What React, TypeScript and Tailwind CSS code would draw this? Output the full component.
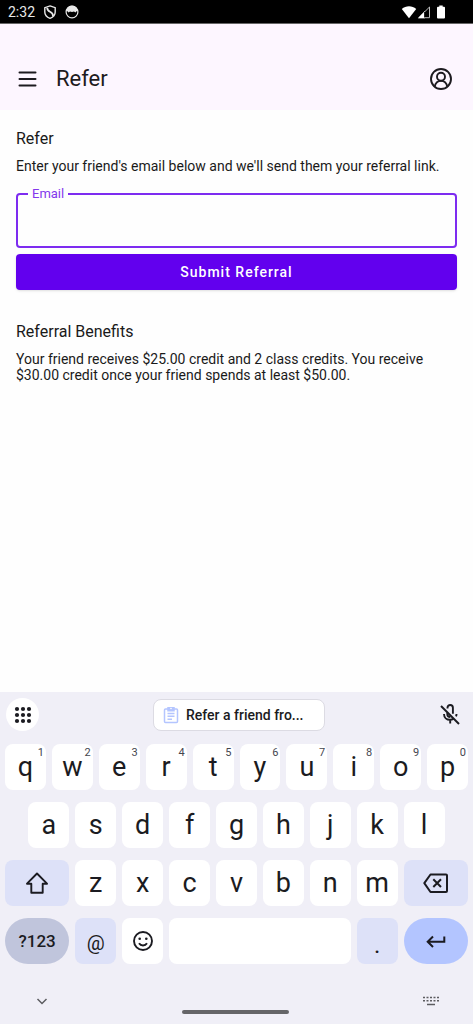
import type { ReactNode } from "react";

const digits = "1234567890";

function StatusBar() {
  return (
    <div className="flex h-6 items-center border-b border-[#666] bg-black px-2 text-[#e8e8e8]">
      <span className="text-sm">2:32</span>
      <svg className="ml-2 size-3.5" viewBox="0 0 14 14" fill="none" stroke="currentColor" strokeWidth="1.4">
        <path d="M7 .9 12.200 2.700V7c0 3-2.200 5.200-5.200 6.300C4 12.200 1.800 10 1.800 7V2.700Z" />
        <path d="M4.200 2.800c0 2.400 1.200 3.200 2.800 4s3.200 2 3 4.200" strokeWidth="1.800" />
      </svg>
      <svg className="ml-2 size-3.5" viewBox="0 0 14 14">
        <circle cx="7" cy="7" r="5.900" fill="none" stroke="currentColor" strokeWidth="1.200" />
        <path d="M1.200 6C1.500 2.500 4 .8 7 .8S12.500 2.500 12.800 6l-1.300.2-1 1.300-1.500-1-2 .6-2-.6-1.500 1-1-1.300Z" fill="currentColor" />
      </svg>
      <div className="ml-auto mr-5 flex items-center text-white">
        <svg className="h-3.5 w-4" viewBox="0 0 16 14" fill="currentColor">
          <path d="M8 13.300.8 4C4.800.4 11.200.4 15.200 4Z" />
        </svg>
        <svg className="h-3.5 w-3.5" viewBox="0 0 14 14">
          <path d="M1.800 12.700 12.500 2V12.700Z" fill="none" stroke="#bbb" />
          <path d="M.8 13.200 8 6V13.200Z" fill="currentColor" />
          <path d="M7.500 7v5.500" stroke="#222" />
        </svg>
        <svg className="ml-1.5 h-3.5 w-2" viewBox="0 0 8 14" fill="currentColor">
          <path d="M2.300.5h3.400v1.300H7a1 1 0 0 1 1 1v9.700a1 1 0 0 1-1 1H1a1 1 0 0 1-1-1V2.800a1 1 0 0 1 1-1h1.300Z" />
        </svg>
      </div>
    </div>
  );
}

function Header() {
  return (
    <header className="flex h-[86px] items-center bg-[#fdf6ff] px-4 pt-6 text-[#1d1b20]">
      <button type="button" aria-label="Menu">
        <svg className="size-6" viewBox="0 0 24 24" stroke="currentColor" strokeWidth="2" strokeLinecap="round">
          <path d="M3.500 5.500h16M3.500 12h16M3.500 18.500h16" />
        </svg>
      </button>
      <h1 className="ml-4 text-[22px] leading-7">Refer</h1>
      <button type="button" aria-label="Account" className="ml-auto mr-1">
        <svg className="size-6" viewBox="0 0 24 24" fill="none" stroke="currentColor" strokeWidth="1.900">
          <circle cx="12" cy="12" r="10" />
          <circle cx="12" cy="9.800" r="4" />
          <path d="M5.700 19.600c.9-3.900 3.300-5.700 6.300-5.700s5.400 1.800 6.300 5.700" />
        </svg>
      </button>
    </header>
  );
}

type KeyProps = {
  children?: ReactNode;
  label?: string;
  hint?: string;
  className?: string;
};

function Key({ children, label, hint, className = "col-span-2 rounded-lg bg-white" }: KeyProps) {
  return (
    <button
      type="button"
      aria-label={label}
      className={`relative flex h-[46px] items-center justify-center text-[27px] leading-8 ${className}`}
    >
      {children}
      {hint && <span className="absolute right-0.5 top-[3px] text-[11px] leading-3 text-[#45464f]">{hint}</span>}
    </button>
  );
}

function Keyboard() {
  return (
    <section aria-label="Keyboard" className="bg-[#f0eff7] text-[#1b1b21]">
      <div className="flex items-center justify-between px-1.5 pt-1.5">
        <button type="button" aria-label="More tools" className="flex size-[33px] items-center justify-center rounded-full bg-white">
          <svg className="size-[18px]" viewBox="0 0 18 18" fill="currentColor">
            {[3, 9, 15].map((y) => [3, 9, 15].map((x) => <circle key={`${x}-${y}`} cx={x} cy={y} r="2.100" />))}
          </svg>
        </button>
        <button
          type="button"
          className="flex h-8 w-[172px] items-center rounded-lg border border-[#dcdbe3] bg-white pl-2 text-sm font-medium"
        >
          <svg className="mr-1.5 h-[18px] w-[18px]" viewBox="0 0 18 18" fill="none" stroke="#b4c5ff" strokeWidth="1.500">
            <rect x="2.500" y="3" width="13" height="13.500" rx="1" />
            <path d="M5.500 7.500h7M5.500 10.300h7M5.500 13.200h4.500" />
            <path d="M6 1.800h6v3H6Z" fill="#b4c5ff" />
            <circle cx="9" cy="2.500" r=".8" fill="#fff" stroke="none" />
          </svg>
          Refer a friend fro...
        </button>
        <button type="button" aria-label="Voice typing off" className="mr-1.5">
          <svg className="size-[22px]" viewBox="0 0 22 22" fill="none" stroke="currentColor" strokeWidth="1.900">
            <path d="M2 2 20 20" />
            <path d="M8.500 4.500v-.8a2.700 2.700 0 0 1 5.400 0v6" />
            <path d="M8.300 8.500V10c0 2 1.500 3 3 3" />
            <path d="M5 10c0 3.500 2.700 5.800 6 5.800 1.300 0 2.500-.3 3.500-1M11.200 16v3.500M17.500 10c0 .9-.2 1.700-.5 2.400" />
          </svg>
        </button>
      </div>

      <div className="grid grid-cols-20 gap-x-1.5 gap-y-3 px-[5px] pt-[13px]">
        {"qwertyuiop".split("").map((c, i) => (
          <Key key={c} hint={digits[i]}>
            {c}
          </Key>
        ))}

        <span />
        {"asdfghjkl".split("").map((c) => (
          <Key key={c}>{c}</Key>
        ))}
        <span />

        <Key label="Shift" className="col-span-3 rounded-lg bg-[#dde1f8]">
          <svg className="size-6" viewBox="0 0 24 24" fill="none" stroke="currentColor" strokeWidth="1.900" strokeLinejoin="round">
            <path d="M12 2.500 22 12.700h-4.300v9H6.300v-9H2Z" />
          </svg>
        </Key>
        {"zxcvbnm".split("").map((c) => (
          <Key key={c}>{c}</Key>
        ))}
        <Key label="Backspace" className="col-span-3 rounded-lg bg-[#dde1f8]">
          <svg className="h-6 w-[26px]" viewBox="0 0 26 24" fill="none" stroke="currentColor" strokeWidth="2" strokeLinejoin="round">
            <path d="M7.500 3.500H23a1 1 0 0 1 1 1v15.500a1 1 0 0 1-1 1H7.500L1.300 12.200Z" />
            <path d="m10.300 8.300 7.700 7.700M18 8.300l-7.700 7.700" />
          </svg>
        </Key>

        <Key className="col-span-3 rounded-full bg-[#c0c5dc]">
          <span className="text-[17px] font-medium">?123</span>
        </Key>
        <Key className="col-span-2 rounded-lg bg-[#dde1f8]">
          <span className="pt-1 text-xl">@</span>
        </Key>
        <Key label="Emoji">
          <svg className="size-5" viewBox="0 0 20 20" fill="none" stroke="currentColor" strokeWidth="1.900">
            <circle cx="10" cy="10" r="9" />
            <circle cx="6.700" cy="7.700" r="1.300" fill="currentColor" stroke="none" />
            <circle cx="13.300" cy="7.700" r="1.300" fill="currentColor" stroke="none" />
            <path d="M6 12.300c.9 1.400 2.300 2.200 4 2.200s3.100-.8 4-2.200" />
          </svg>
        </Key>
        <Key label="Space" className="col-span-8 rounded-lg bg-white" />
        <Key className="col-span-2 rounded-lg bg-[#dde1f8]">
          <span className="pt-2 text-2xl">.</span>
        </Key>
        <Key label="Enter" className="col-span-3 rounded-full bg-[#b3c5ff]">
          <svg className="h-3.5 w-5" viewBox="0 0 20 14" fill="none" stroke="currentColor" strokeWidth="2">
            <path d="M18.300 2.500v5.300H2M7 2.500 1.700 7.800 7 13" />
          </svg>
        </Key>
      </div>

      <div className="flex h-[60px] items-end justify-between pl-9 pr-[34px] pb-2.5">
        <button type="button" aria-label="Hide keyboard" className="pb-[7px]">
          <svg className="h-3 w-3" viewBox="0 0 12 12" fill="none" stroke="#5c5c60" strokeWidth="1.500">
            <path d="m1.500 4 4.500 4.500L10.500 4" />
          </svg>
        </button>
        <div className="h-1 w-[107px] rounded-full bg-[#656568]" />
        <button type="button" aria-label="Switch keyboard" className="pb-[7px]">
          <svg className="h-3 w-4" viewBox="0 0 16 12" fill="none" stroke="#5c5c60" strokeWidth="1.500">
            <path d="M0 2.500h16M0 5.700h16" strokeDasharray="2 1.500" />
            <path d="M4 9.500h8" />
          </svg>
        </button>
      </div>
    </section>
  );
}

export default function App() {
  return (
    <div className="flex min-h-screen flex-col bg-[#fefefe] font-['Roboto',sans-serif] text-[#1a1a1a]">
      <StatusBar />
      <Header />

      <main className="flex-1 px-4 pt-[17px]">
        <h2 className="text-base leading-6">Refer</h2>
        <p className="mt-[7px] text-sm leading-4">
          Enter your friend's email below and we'll send them your referral link.
        </p>

        <form className="mt-3">
          <fieldset className="rounded border-2 border-[#7d2cf0]">
            <legend className="ml-2.5 px-1 text-[13px] leading-4 text-[#8338ec]">
              <label htmlFor="email">Email</label>
            </legend>
            <input id="email" type="email" className="block h-11 w-full px-3.5 text-base outline-none" />
          </fieldset>
          <button
            type="submit"
            className="mt-1.5 h-9 w-full rounded bg-[#6200ee] text-sm font-medium tracking-[1px] text-white shadow"
          >
            Submit Referral
          </button>
        </form>

        <h2 className="mt-[30px] text-base leading-6">Referral Benefits</h2>
        <p className="mt-[7px] text-sm leading-4">
          Your friend receives $25.00 credit and 2 class credits. You receive $30.00 credit once your friend spends at
          least $50.00.
        </p>
      </main>

      <Keyboard />
    </div>
  );
}
